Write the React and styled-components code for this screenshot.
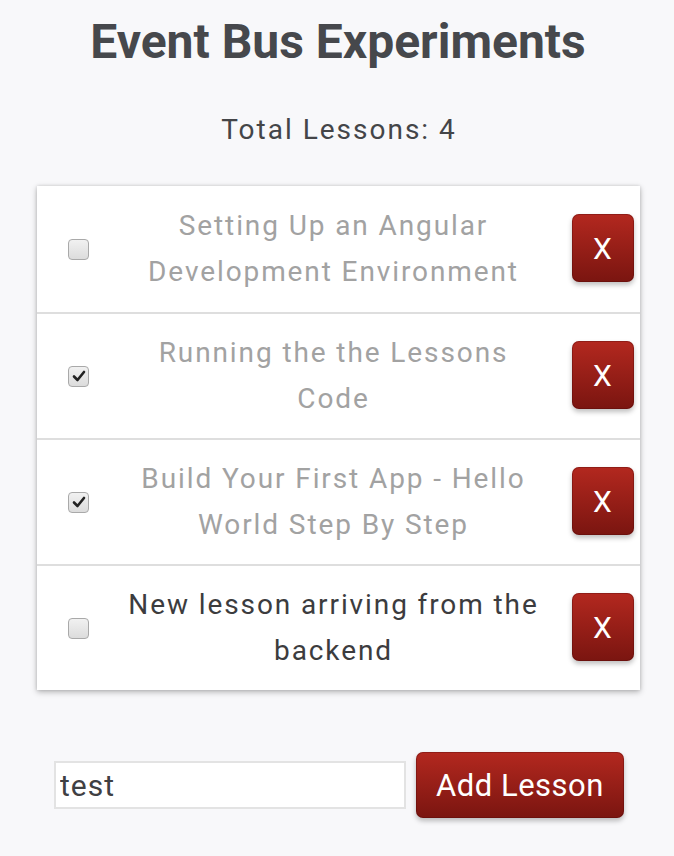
import React from "react";
import styled, { createGlobalStyle } from "styled-components";

const Global = createGlobalStyle`
  html, body { margin: 0; padding: 0; background: #f8f8fa; }
  body { font-family: Roboto, "Noto Sans", "Liberation Sans", sans-serif; }
  * { box-sizing: border-box; }
`;

const Page = styled.div`
  width: 674px;
  min-height: 856px;
  display: flex;
  flex-direction: column;
  align-items: center;
  padding-top: 14px;
`;

const Title = styled.h1`
  margin: 0;
  font-size: 48px;
  line-height: 56px;
  font-weight: 700;
  color: #46484c;
  text-align: center;
  margin-left: 2px;
`;

const Total = styled.div`
  margin-top: 43px;
  font-size: 28px;
  line-height: 34px;
  letter-spacing: 2px;
  color: #444548;
  margin-left: 4px;
`;

const Card = styled.div`
  margin-top: 39px;
  width: 603px;
  margin-left: 2px;
  background: #fff;
  box-shadow: 0 2px 6px rgba(0, 0, 0, 0.28), 0 0 3px rgba(0, 0, 0, 0.12);
`;

const Row = styled.div`
  display: grid;
  grid-template-columns: 84px 420px 1fr;
  align-items: center;
  height: 126px;
  border-top: ${(p) => (p.$first ? "none" : "2px solid #dedede")};
`;

const CheckCell = styled.div`
  display: flex;
  justify-content: center;
`;

const Box = styled.span`
  width: 21px;
  height: 21px;
  border: 1.5px solid #a9a9a9;
  border-radius: 4px;
  background: linear-gradient(#f1f1f1, #dcdcdc);
  display: flex;
  align-items: center;
  justify-content: center;
`;

const Text = styled.div`
  text-align: center;
  font-size: 28px;
  line-height: 46px;
  letter-spacing: 1.9px;
  color: ${(p) => (p.$done ? "#a2a2a2" : "#3c3c3e")};
  padding-left: 6px;
`;

const BtnCell = styled.div`
  display: flex;
  justify-content: flex-end;
  padding-right: 6px;
`;

const RedButton = styled.button`
  border: none;
  border-radius: 7px;
  background: linear-gradient(#b3281f, #7a1510);
  color: #fff;
  font-family: Roboto, "Noto Sans", sans-serif;
  font-size: 29px;
  box-shadow: 0 3px 5px rgba(0, 0, 0, 0.25), inset 0 0 0 1px rgba(80, 10, 10, 0.35);
  cursor: pointer;
  padding: 0;
`;

const XButton = styled(RedButton)`
  width: 62px;
  height: 68px;
  margin-top: -2px;
  font-size: 30px;
`;

const AddButton = styled(RedButton)`
  width: 208px;
  height: 66px;
  font-size: 31px;
  letter-spacing: 0.5px;
`;

const Form = styled.div`
  margin-top: 62px;
  align-self: flex-start;
  margin-left: 54px;
  display: flex;
  align-items: center;
  gap: 10px;
`;

const Input = styled.input`
  width: 352px;
  height: 48px;
  border: 2px solid #e3e3e3;
  background: #fff;
  font-family: Roboto, "Noto Sans", sans-serif;
  font-size: 30px;
  letter-spacing: 1px;
  color: #3f4043;
  padding: 0 4px;
  outline: none;
`;

const Check = () => (
  <svg width="14" height="14" viewBox="0 0 14 14">
    <path d="M2 7.5 L5.5 11 L12 3" fill="none" stroke="#222" strokeWidth="2.6" strokeLinecap="round" strokeLinejoin="round" />
  </svg>
);

const lessons = [
  { text: "Setting Up an Angular Development Environment", done: true, checked: false },
  { text: "Running the the Lessons Code", done: true, checked: true },
  { text: "Build Your First App - Hello World Step By Step", done: true, checked: true },
  { text: "New lesson arriving from the backend", done: false, checked: false },
];

export default function App() {
  return (
    <>
      <Global />
      <Page>
        <Title>Event Bus Experiments</Title>
        <Total>Total Lessons: 4</Total>
        <Card>
          {lessons.map((l, i) => (
            <Row key={i} $first={i === 0}>
              <CheckCell>
                <Box>{l.checked && <Check />}</Box>
              </CheckCell>
              <Text $done={l.done}>{l.text}</Text>
              <BtnCell>
                <XButton>X</XButton>
              </BtnCell>
            </Row>
          ))}
        </Card>
        <Form>
          <Input defaultValue="test" />
          <AddButton>Add Lesson</AddButton>
        </Form>
      </Page>
    </>
  );
}
